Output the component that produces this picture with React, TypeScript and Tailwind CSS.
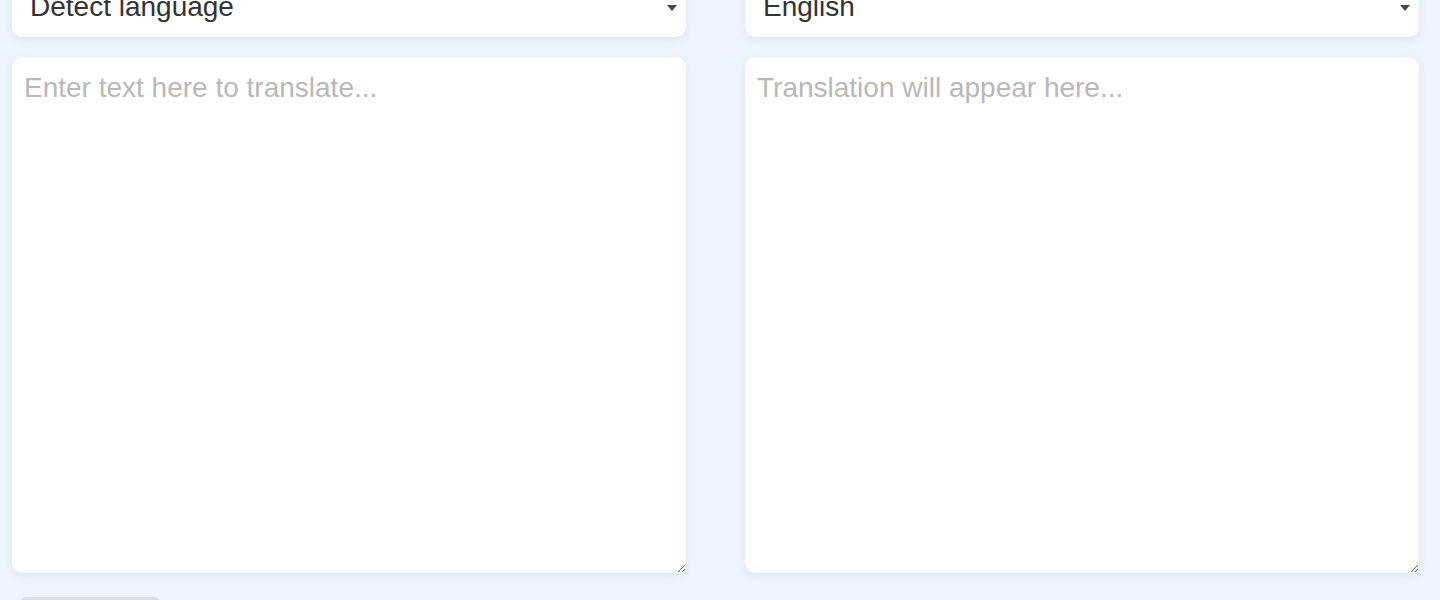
import { useState } from 'react';

export default function App() {
  const [source, setSource] = useState('auto');
  const [target, setTarget] = useState('en');
  const [text, setText] = useState('');

  return (
    <div className="min-h-screen bg-[#edf4fd] overflow-hidden font-['Liberation_Sans',Arial,sans-serif]">
      <div className="flex gap-[59px] pl-[12px] pr-[21px] -mt-[23px]">
        {/* Source column */}
        <div className="flex-1 flex flex-col gap-[20px]">
          <div className="relative">
            <select
              value={source}
              onChange={(e) => setSource(e.target.value)}
              className="w-full h-[60px] appearance-none bg-white rounded-[10px] pl-[18px] pr-10 text-[28px] text-[#333] shadow-[0_3px_8px_rgba(30,60,110,0.08)] outline-none"
            >
              <option value="auto">Detect language</option>
              <option value="en">English</option>
              <option value="es">Spanish</option>
            </select>
            <svg className="absolute right-[8px] top-[27px] w-[12px] h-[8px] pointer-events-none" viewBox="0 0 12 8">
              <path d="M1 1 L6 7 L11 1 Z" fill="#444" />
            </svg>
          </div>
          <textarea
            value={text}
            onChange={(e) => setText(e.target.value)}
            placeholder="Enter text here to translate..."
            className="w-full h-[516px] bg-white rounded-[10px] px-[12px] py-[13px] text-[28px] leading-[36px] text-[#333] placeholder:text-[#b8b8b8] shadow-[0_3px_8px_rgba(30,60,110,0.08)] outline-none resize-y"
          />
          <div className="flex pt-[4px]">
            <button
              aria-label="Translate"
              className="h-[40px] w-[140px] ml-[8px] rounded-t-[6px] bg-[#d9dde3]"
            />
          </div>
        </div>

        {/* Target column */}
        <div className="flex-1 flex flex-col gap-[20px]">
          <div className="relative">
            <select
              value={target}
              onChange={(e) => setTarget(e.target.value)}
              className="w-full h-[60px] appearance-none bg-white rounded-[10px] pl-[18px] pr-10 text-[28px] text-[#333] shadow-[0_3px_8px_rgba(30,60,110,0.08)] outline-none"
            >
              <option value="en">English</option>
              <option value="es">Spanish</option>
              <option value="fr">French</option>
            </select>
            <svg className="absolute right-[8px] top-[27px] w-[12px] h-[8px] pointer-events-none" viewBox="0 0 12 8">
              <path d="M1 1 L6 7 L11 1 Z" fill="#444" />
            </svg>
          </div>
          <textarea
            readOnly
            placeholder="Translation will appear here..."
            className="w-full h-[516px] bg-white rounded-[10px] px-[12px] py-[13px] text-[28px] leading-[36px] text-[#333] placeholder:text-[#b8b8b8] shadow-[0_3px_8px_rgba(30,60,110,0.08)] outline-none resize-y"
          />
        </div>
      </div>
    </div>
  );
}
